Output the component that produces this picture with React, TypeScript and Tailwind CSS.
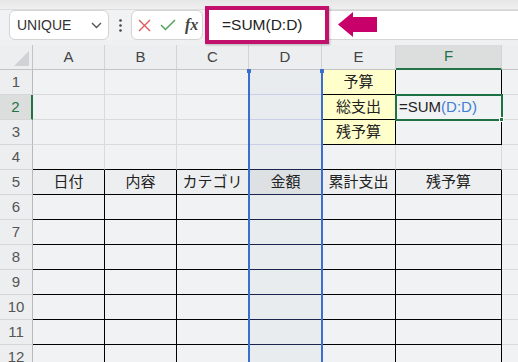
import React from "react";
import clsx from "clsx";

const FONT = { fontFamily: '"Liberation Sans", "Noto Sans CJK JP", sans-serif' };

const COLS = ["A", "B", "C", "D", "E", "F", "G"];
const ROWS = Array.from({ length: 12 }, (_, i) => i + 1);

const GRID = "border-[#dadada]";
const BLACK = "border-black";

const LABELS: Record<string, string> = {
  E1: "予算",
  E2: "総支出",
  E3: "残予算",
  A5: "日付",
  B5: "内容",
  C5: "カテゴリ",
  D5: "金額",
  E5: "累計支出",
  F5: "残予算",
};

function cellClasses(col: string, row: number) {
  const table = row >= 5 && col !== "G";
  const header = row === 5 && col !== "G";

  if (col === "G") return clsx("border-b", GRID);

  if (col === "D") {
    return clsx(
      "border-b",
      row === 5 ? "bg-[#dde1e4]" : "bg-[#e8ecef]",
      row >= 4 ? "border-[#1b2450]" : "border-[#c9cfe9]"
    );
  }

  if (col === "E" || col === "F") {
    if (row <= 3) {
      return clsx("border-r border-b", BLACK, col === "E" && "bg-[#ffffcc]");
    }
    if (row === 4) return "border-b border-r border-b-black border-r-[#dadada]";
  }

  if (table) return clsx("border-r border-b", BLACK, header && "bg-[#eceef0]");
  if (row === 4) return "border-b border-r border-b-black border-r-[#dadada]";
  return clsx("border-r border-b", GRID);
}

function FormulaBar() {
  return (
    <div className="flex h-[30px] items-stretch">
      <div className="ml-[9px] flex w-[100px] items-center justify-between rounded-md border border-[#d3d3d3] bg-white pl-[7px] pr-[6px]">
        <span className="text-[14px] text-[#333]">UNIQUE</span>
        <svg width="11" height="7" viewBox="0 0 11 7" className="text-[#555]">
          <path d="M1 1l4.5 4.5L10 1" fill="none" stroke="currentColor" strokeWidth="1.4" />
        </svg>
      </div>
      <div className="flex w-[22px] items-center justify-center">
        <svg width="3" height="13" viewBox="0 0 3 13">
          <circle cx="1.5" cy="1.5" r="1.3" fill="#444" />
          <circle cx="1.5" cy="6.5" r="1.3" fill="#444" />
          <circle cx="1.5" cy="11.5" r="1.3" fill="#444" />
        </svg>
      </div>
      <div className="flex w-[72px] items-center gap-[9px] rounded-md border border-[#d3d3d3] bg-white pl-[6px]">
        <svg width="13" height="13" viewBox="0 0 13 13">
          <path d="M1 1l11 11M12 1L1 12" stroke="#e15a5a" strokeWidth="1.4" fill="none" />
        </svg>
        <svg width="16" height="12" viewBox="0 0 16 12">
          <path d="M1 6l4.5 4.5L15 1" stroke="#4ea55a" strokeWidth="1.5" fill="none" />
        </svg>
        <span
          className="text-[16px] italic font-bold text-[#444]"
          style={{ fontFamily: '"Liberation Serif", serif' }}
        >
          fx
        </span>
      </div>
      <div className="ml-[2px] flex flex-1 items-center border-y border-[#d6d6d6] bg-white">
        <div className="relative z-10 flex h-[38px] w-[124px] items-center border-4 border-[#c2116c] bg-white pl-[13px] text-[15.5px] text-[#222] shadow-[1px_1px_2px_rgba(0,0,0,0.25)]">
          =SUM(D:D)
        </div>
        <svg width="40" height="26" viewBox="0 0 40 26" className="ml-[9px]">
          <polygon points="0,12.5 15,0 15,5 39,5 39,20 15,20 15,25" fill="#c8006a" />
        </svg>
      </div>
    </div>
  );
}

function Sheet() {
  return (
    <div className="relative grid w-[600px] grid-cols-[33px_72px_72px_72px_73px_74px_106px_98px] auto-rows-[25px]">
      <div className="flex items-end justify-end border-r border-b border-[#c4c4c4] bg-[#eceef0] p-[3px]">
        <svg width="15" height="15" viewBox="0 0 15 15">
          <polygon points="15,0 15,15 0,15" fill="#d0d2d5" />
        </svg>
      </div>
      {COLS.map((c) => (
        <div
          key={c}
          className={clsx(
            "flex items-center justify-center border-r border-[#d3d3d3] text-[15px]",
            c === "F"
              ? "border-b-2 border-b-[#217346] bg-[#dcdedd] text-[#217346]"
              : "border-b border-b-[#c4c4c4] bg-[#eceef0] text-[#444]"
          )}
        >
          {c === "G" ? "" : c}
        </div>
      ))}
      {ROWS.map((r) => (
        <React.Fragment key={r}>
          <div
            className={clsx(
              "flex items-center justify-center border-b border-b-[#d6d6d6] text-[15px]",
              r === 2
                ? "border-r-2 border-r-[#217346] bg-[#dcdedd] text-[#217346]"
                : "border-r border-r-[#b9b9b9] bg-[#eceef0] text-[#555]"
            )}
          >
            {r}
          </div>
          {COLS.map((c) => {
            const key = `${c}${r}`;
            const text = LABELS[key];
            return (
              <div
                key={key}
                className={clsx(
                  "flex items-center justify-center overflow-visible whitespace-nowrap text-[15px] text-[#222]",
                  cellClasses(c, r)
                )}
              >
                {key === "F2" ? (
                  <span className="w-full pl-[3px] text-left">
                    =SUM<span className="text-[#3d7fd6]">(D:D)</span>
                  </span>
                ) : (
                  text
                )}
              </div>
            );
          })}
        </React.Fragment>
      ))}

      {/* column D selection */}
      <div className="pointer-events-none absolute left-[248px] top-[25px] bottom-0 w-[75px] border-x-2 border-[#3b6fcd]">
        <div className="absolute -left-[3px] -top-[1px] h-[4px] w-[4px] bg-[#3b6fcd]" />
        <div className="absolute -right-[3px] -top-[1px] h-[4px] w-[4px] bg-[#3b6fcd]" />
      </div>

      {/* active cell F2 */}
      <div className="pointer-events-none absolute left-[395px] top-[49px] h-[27px] w-[108px] border-2 border-[#1e7145]">
        <div className="absolute -bottom-[3px] -right-[3px] h-[5px] w-[5px] border border-white bg-[#1e7145]" />
      </div>
    </div>
  );
}

export default function App() {
  return (
    <div className="h-[362px] w-[518px] overflow-hidden bg-[#f1f2f3]" style={FONT}>
      <div className="h-[10px] border-b border-[#dcdcdc] bg-gradient-to-b from-[#e6e6e6] to-[#f0f0f0]" />
      <FormulaBar />
      <div className="h-[5px] bg-[#eef0f2]" />
      <Sheet />
    </div>
  );
}
